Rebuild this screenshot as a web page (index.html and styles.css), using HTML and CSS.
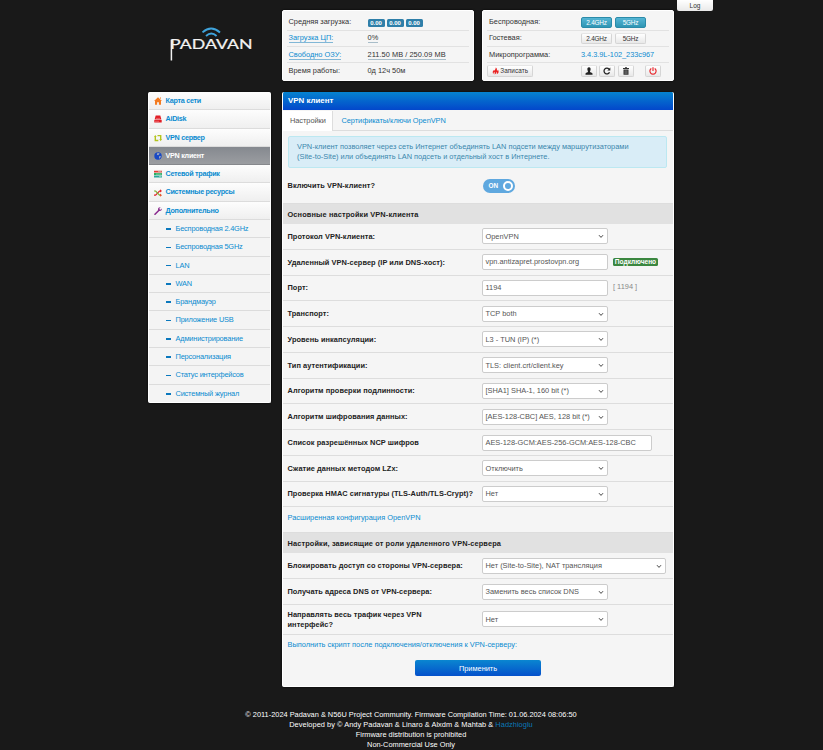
FILE: index.html
```html
<!DOCTYPE html>
<html lang="ru">
<head>
<meta charset="utf-8">
<title>VPN клиент</title>
<link rel="stylesheet" href="styles.css">
</head>
<body>
<svg class="defs" aria-hidden="true">
  <symbol id="chev" viewBox="0 0 6 5"><path d="M1 1.2 3 3.4 5 1.2" fill="none" stroke="#444" stroke-width="1"/></symbol>
</svg>
<button class="log">Log</button>
<header class="top">
  <svg class="logo" viewBox="0 0 90 42" role="img">
    <g fill="none" stroke="#3fa3db" stroke-width="1.9">
      <path d="M34.5 12.4Q43 4.800 52 12.4"/>
      <path d="M38 16Q43.300 11.200 48.600 16"/>
    </g>
    <path d="M3.400 40.500V19.600" stroke="#f2f2f2" stroke-width="1.5"/>
    <text x="2" y="28.900" textLength="82.500" lengthAdjust="spacingAndGlyphs">PADAVAN</text>
  </svg>
  <section class="card stats">
    <div class="line"><span>Средняя загрузка:</span><span class="badges"><b>0.00</b><b>0.00</b><b>0.00</b></span></div>
    <div class="line"><span><a class="dot">Загрузка ЦП:</a></span><span><i class="dot">0%</i></span></div>
    <div class="line"><span><a class="dot">Свободно ОЗУ:</a></span><span><i class="dot">211.50 MB / 250.09 MB</i></span></div>
    <div class="line"><span>Время работы:</span><span>0д 12ч 50м</span></div>
  </section>
  <section class="card wifi">
    <div class="line"><span>Беспроводная:</span><span class="btns"><button class="mini on">2.4GHz</button><button class="mini on">5GHz</button></span></div>
    <div class="line"><span>Гостевая:</span><span class="btns"><button class="mini">2.4GHz</button><button class="mini">5GHz</button></span></div>
    <div class="line"><span>Микропрограмма:</span><a>3.4.3.9L-102_233c967</a></div>
    <div class="line tools">
      <span><button class="mini save"><svg viewBox="0 0 8 8"><path d="M4.200 0C4.600 1.400 3 2.200 3.400 3.700L2.300 2.900C.8 4 .2 5.800 1.700 7.600 1.500 6.300 2.200 5.500 3 4.900 2.900 6 3.300 6.600 3 8 4.900 7.300 5.200 5.900 4.600 4.800 5.800 5.100 5.900 6.600 5.200 7.700 7.600 6.900 8.200 4.700 6.900 2.700L6.300 3.800 5.500 3C5.900 1.500 5.200.4 4.200 0Z" fill="#ea2020"/></svg>Записать</button></span>
      <span class="btns">
        <button class="mini ic"><svg viewBox="0 0 8 8"><path d="M4 .2C2.600.2 2.200 1.300 2.400 2.600 2.500 3.700 3 4 3 4.800 2.900 5.500.8 5.700.5 6.500V7.700H7.500V6.500C7.200 5.700 5.100 5.500 5 4.800 5 4 5.500 3.700 5.600 2.600 5.800 1.300 5.400.2 4 .2Z" fill="#222"/></svg></button>
        <button class="mini ic"><svg viewBox="0 0 8 8"><path d="M6.500 5.200A2.850 2.850 0 1 1 6 2.100" fill="none" stroke="#222" stroke-width="1.300"/><path d="M7.300.4V3.400H4.300Z" fill="#222"/></svg></button>
        <button class="mini ic"><svg viewBox="0 0 8 8"><path d="M1 1H3V.2H5V1H7V2H1ZM1.500 2.500H6.500V7.800H1.500Z" fill="#333"/><path d="M3 3.300V7M4 3.300V7M5 3.300V7" stroke="#aaa" stroke-width=".4"/></svg></button>
        <button class="mini ic power"><svg viewBox="0 0 8 8"><path d="M2.300 1.500A3.100 3.100 0 1 0 5.700 1.500M4 .3V4" fill="none" stroke="#e8242a" stroke-width="1.150"/></svg></button>
      </span>
    </div>
  </section>
</header>

<div class="page">
  <nav class="menu">
    <a><svg viewBox="0 0 8 8"><path d="M4 .2 8 4H7V7.800H4.900V5.200H3.100V7.800H1V4H0L4 .2ZM6 .5H7V2L6 1.200Z" fill="#f47b20"/></svg>Карта сети</a>
    <a><svg viewBox="0 0 8 8"><path d="M1.700.6H6.300L7.400 4.600H.6ZM.3 5H7.700V7.500H.3Z" fill="#e11d25"/><path d="M2 3.400H6M1 6.300H5" stroke="#f5a0a0" stroke-width=".5"/></svg>AiDisk</a>
    <a><svg viewBox="0 0 8 8"><path d="M1.300 2.500V6.500H4.300M3.500 1.600H6.700V5.500" fill="none" stroke="#b3c41d" stroke-width="1.400"/><path d="M0 3.100 1.300 1 2.700 3.100ZM5.300 5 6.700 7.200 8 5Z" fill="#b3c41d"/></svg>VPN сервер</a>
    <a class="active"><svg viewBox="0 0 8 8"><circle cx="4" cy="4" r="3.700" fill="#1748c5"/><path d="M3.500.8 5.700 1.500 5 2.500 4.200 3.300 2.800 2.700ZM5 4.300 7 4 6.200 6 5 6.800Z" fill="#9ba5bf"/></svg>VPN клиент</a>
    <a><svg viewBox="0 0 8 8"><path d="M0 .7H8V2.500H0Z" fill="#e33b36"/><path d="M0 3.100H8V5H0Z" fill="#2bae61"/><path d="M0 5.600H8V7.500H0Z" fill="#2aa79b"/><path d="M4 1.600H7.500M2 4.100H7.500M5 6.500H7.500" stroke="#bce3d0" stroke-width=".6"/></svg>Сетевой трафик</a>
    <a><svg viewBox="0 0 8 8"><path d="M0 6.200H1.600L5.500 2H7" fill="none" stroke="#e4252c" stroke-width="1.200"/><path d="M0 2H1.600L5.500 6.200H7" fill="none" stroke="#7faf35" stroke-width="1.200"/><path d="M6 .3 8 2 6 3.600Z" fill="#e4252c"/><path d="M6 4.600 8 6.200 6 7.800Z" fill="#e4552c"/></svg>Системные ресурсы</a>
    <a><svg viewBox="0 0 8 8"><path d="M1 7.200 5 3.300" stroke="#8a2c8f" stroke-width="1.600" stroke-linecap="round"/><path d="M6.500.4 5.400 1.600 5.600 2.600 6.600 2.700 7.700 1.500C8.100 3 7 4.300 5.500 4.100L4 2.700C3.900 1.200 5 .2 6.500.4Z" fill="#8a2c8f"/></svg>Дополнительно</a>
    <a class="sub">Беспроводная 2.4GHz</a>
    <a class="sub">Беспроводная 5GHz</a>
    <a class="sub">LAN</a>
    <a class="sub">WAN</a>
    <a class="sub">Брандмауэр</a>
    <a class="sub">Приложение USB</a>
    <a class="sub">Администрирование</a>
    <a class="sub">Персонализация</a>
    <a class="sub">Статус интерфейсов</a>
    <a class="sub">Системный журнал</a>
  </nav>

  <main class="panel">
    <h1>VPN клиент</h1>
    <div class="tabs"><a class="current">Настройки</a><a>Сертификаты/ключи OpenVPN</a></div>
    <p class="info">VPN-клиент позволяет через сеть Интернет объединять LAN подсети между маршрутизаторами<br>(Site-to-Site) или объединять LAN подсеть и отдельный хост в Интернете.</p>
    <div class="row first"><label>Включить VPN-клиент?</label><span class="toggle">ON<i></i></span></div>

    <h2>Основные настройки VPN-клиента</h2>
    <div class="row"><label>Протокол VPN-клиента:</label><div class="field">OpenVPN<svg><use href="#chev"/></svg></div></div>
    <div class="row"><label>Удаленный VPN-сервер (IP или DNS-хост):</label><div class="field">vpn.antizapret.prostovpn.org</div><span class="ok">Подключено</span></div>
    <div class="row"><label>Порт:</label><div class="field">1194</div><span class="hint">[ 1194 ]</span></div>
    <div class="row"><label>Транспорт:</label><div class="field">TCP both<svg><use href="#chev"/></svg></div></div>
    <div class="row"><label>Уровень инкапсуляции:</label><div class="field">L3 - TUN (IP) (*)<svg><use href="#chev"/></svg></div></div>
    <div class="row"><label>Тип аутентификации:</label><div class="field">TLS: client.crt/client.key<svg><use href="#chev"/></svg></div></div>
    <div class="row"><label>Алгоритм проверки подлинности:</label><div class="field">[SHA1] SHA-1, 160 bit (*)<svg><use href="#chev"/></svg></div></div>
    <div class="row"><label>Алгоритм шифрования данных:</label><div class="field">[AES-128-CBC] AES, 128 bit (*)<svg><use href="#chev"/></svg></div></div>
    <div class="row"><label>Список разрешённых NCP шифров</label><div class="field wide">AES-128-GCM:AES-256-GCM:AES-128-CBC</div></div>
    <div class="row"><label>Сжатие данных методом LZx:</label><div class="field">Отключить<svg><use href="#chev"/></svg></div></div>
    <div class="row"><label>Проверка HMAC сигнатуры (TLS-Auth/TLS-Crypt)?</label><div class="field">Нет<svg><use href="#chev"/></svg></div></div>
    <div class="more"><a>Расширенная конфигурация OpenVPN</a></div>

    <h2>Настройки, зависящие от роли удаленного VPN-сервера</h2>
    <div class="row"><label>Блокировать доступ со стороны VPN-сервера:</label><div class="field full">Нет (Site-to-Site), NAT трансляция<svg><use href="#chev"/></svg></div></div>
    <div class="row"><label>Получать адреса DNS от VPN-сервера:</label><div class="field">Заменить весь список DNS<svg><use href="#chev"/></svg></div></div>
    <div class="row tall"><label>Направлять весь трафик через VPN<br>интерфейс?</label><div class="field">Нет<svg><use href="#chev"/></svg></div></div>
    <div class="more script"><a>Выполнить скрипт после подключения/отключения к VPN-серверу:</a></div>
    <button class="apply">Применить</button>
  </main>
</div>

<footer>
  <div>© 2011-2024 Padavan &amp; N56U Project Community. Firmware Compilation Time: 01.06.2024 08:06:50</div>
  <div class="devs">Developed by © Andy Padavan &amp; Linaro &amp; Alxdm &amp; Mahtab &amp; <a>Hadzhioglu</a></div>
  <div>Firmware distribution is prohibited</div>
  <div>Non-Commercial Use Only</div>
</footer>
</body>
</html>
```
FILE: styles.css
```css
* { box-sizing: border-box; }
body {
  margin: 0;
  height: 750px;
  overflow: hidden;
  position: relative;
  background: #191919;
  color: #333;
  font: 7.4px/10.3px "Liberation Sans", Arial, sans-serif;
}
a { color: #0a8bd0; text-decoration: none; }
button { font: inherit; margin: 0; padding: 0; border: 0; }
i { font-style: normal; }
.defs { position: absolute; width: 0; height: 0; }
.log {
  position: absolute; left: 677px; top: 0; width: 36px; height: 11px;
  background: linear-gradient(#fff, #e9e9e9); border-radius: 0 0 2px 2px;
  font-size: 6.5px; line-height: 11px; color: #333;
}

.top {
  display: grid; grid-template-columns: 105px 193px 192px; column-gap: 8px;
  padding: 10px 0 0 168px; height: 92px; align-items: start;
}
.logo { width: 90px; height: 42px; margin-top: 10px; }
.logo text { font: 400 12.5px Lato, sans-serif; fill: #f2f2f2; stroke: #f2f2f2; stroke-width: .2; }
.card {
  height: 71px; padding: 4px 4px 0 4px; border-radius: 2px; background: #f5f5f5;
  border: 1px solid #fff; box-shadow: 0 0 2px #000;
}
.stats { margin-left: .5px; }
.line {
  display: grid; grid-template-columns: 79px 1fr; align-items: center;
  height: 16.1px; padding-left: 2px; border-bottom: 1px solid #e2e2e2;
}
.line:last-child { border: 0; }
.wifi .line { grid-template-columns: 92px 1fr; }
.wifi .line > a { letter-spacing: -.04px; }
.dot { border-bottom: 1px solid #a8bdc9; }
i.dot { letter-spacing: .05px; }
a.dot { border-color: #81b7d6; }
.badges { display: flex; gap: 2px; }
.badges b {
  width: 17px; height: 8px; border-radius: 1.500px; background: #2f7fa9; color: #fff;
  font-size: 6px; line-height: 8px; text-align: center;
}
.btns { display: flex; gap: 3px; }
.mini {
  width: 31px; height: 11px; border-radius: 2px; color: #333; font-size: 6.4px; line-height: 10px;
  letter-spacing: -.2px;
  border: 1px solid #d5d5d5; border-top-color: #e6e6e6; background: linear-gradient(#fff, #e8e8e8);
  display: flex; align-items: center; justify-content: center;
}
.mini.on { background: linear-gradient(#55b5d4, #2f96b4); border-color: #2b8ba9; color: #fff; }
.mini svg { width: 8px; height: 8px; flex: none; }
.mini.save { width: 46px; height: 12px; gap: 1.500px; margin-left: -2px; letter-spacing: .1px; }
.mini.save svg { width: 7px; }
.mini.ic { width: 16px; height: 12px; }
.tools .btns { gap: 2.400px; }
.mini.power { margin-left: 9px; }

.page { display: grid; grid-template-columns: 123px 392px; column-gap: 11px; padding-left: 148px; align-items: start; }
.menu { border: 1px solid #fff; border-top: 0; border-radius: 2px; background: #f4f4f4; height: 311px; overflow: hidden; box-shadow: 0 0 2px #000; }
.menu a {
  display: flex; align-items: center; gap: 3.500px; height: 18.290px; padding: 1px 0 0 5px;
  font-weight: bold; font-size: 7.2px; letter-spacing: -.27px; border-bottom: 1px solid #dcdcdc; background: linear-gradient(#fdfdfd, #efefef);
}
.menu svg { width: 8px; height: 8px; }
.menu .active { background: linear-gradient(#85898f, #9b9da1); color: #fff; border-color: #86888c; }
.menu .sub { font-weight: normal; font-size: 7.4px; letter-spacing: -.18px; padding-left: 16.500px; gap: 4.500px; background: #f4f4f4; }
.menu .sub::before { content: ""; width: 5.500px; height: 1.500px; background: #0a78bd; }
.menu a:last-child { border: 0; }

.panel { height: 595px; background: #f5f5f5; border: 1px solid #fff; border-top: 0; border-radius: 2px; box-shadow: 0 0 2px #000; overflow: hidden; }
h1 { margin: 0 -1px; height: 18px; padding-left: 6px; background: linear-gradient(#0583cf, #0347cb); color: #fff; font-size: 7.9px; line-height: 18px; }
.tabs { display: flex; height: 21px; padding-top: 1px; border-bottom: 1px solid #ddd; }
.tabs a { padding: 0 8.500px; line-height: 20px; letter-spacing: -.05px; }
.tabs .current { width: 50px; height: 20px; background: #fff; border-right: 1px solid #ddd; color: #555; padding: 0 7px; }
.info { margin: 5px 6px 0 5px; height: 32px; padding: 5px 0 0 8px; border: 1px solid #bce8f1; border-radius: 2px; background: #d9edf7; color: #3a87ad; }
.row { display: flex; align-items: center; height: 25.780px; padding-left: 4.500px; border-bottom: 1px solid #ddd; }
.row label { width: 194.500px; padding-top: 1px; font-weight: bold; color: #222; letter-spacing: .06px; white-space: nowrap; }
.row.first { height: 35px; border: 0; padding-bottom: 0; }
.toggle { width: 32px; height: 14px; margin-left: .5px; border-radius: 7px; background: #5fa8df; color: #fff; font-weight: bold; font-size: 6.4px; line-height: 14px; padding-left: 6px; display: flex; justify-content: space-between; align-items: center; }
.toggle i { width: 10px; height: 10px; border: 2px solid #fff; border-radius: 50%; margin-right: 2px; }
h2 { margin: 0; height: 21px; padding-left: 4.500px; background: #e1e1e1; border-top: 1px solid #ddd; color: #222; font-size: 7.4px; line-height: 21px; letter-spacing: .12px; }
.field { width: 126px; height: 16px; padding: 1px 3px 0 2.500px; border: 1px solid #ccc; border-radius: 2px; background: #fff; color: #555; display: flex; align-items: center; justify-content: space-between; white-space: nowrap; }
.field svg { width: 6px; height: 5px; flex: none; }
.field.wide { width: 170px; }
.field.full { width: 184px; }
.ok { margin-left: 5px; width: 45px; height: 8.500px; background: #3b8740; color: #fff; border-radius: 1.500px; font-size: 6.6px; font-weight: bold; line-height: 8px; text-align: center; }
.hint { margin-left: 5px; color: #888; margin-top: -1px; }
.more { height: 25px; padding: 5.500px 0 0 4.500px; }
.row.tall { height: 30px; }
.apply { display: block; width: 126px; height: 16px; margin: 0 auto; border-radius: 2px; background: linear-gradient(#0a86d0, #0450cb); color: #fff; line-height: 17px; }

footer { width: 822px; margin-top: 22.500px; text-align: center; color: #fff; }
.devs { letter-spacing: .04px; }
footer a { color: #0a78b8; }
```
